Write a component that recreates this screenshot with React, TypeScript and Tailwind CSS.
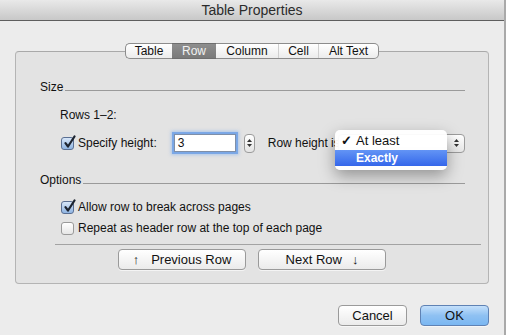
import React from "react";

const font = { fontFamily: '"Liberation Sans", Arial, sans-serif' };

function Check({ checked }: { checked: boolean }) {
  return (
    <span
      className={
        "relative inline-block w-[13px] h-[13px] rounded-[3px] border shrink-0 " +
        (checked
          ? "border-[#5a6f93] bg-gradient-to-b from-[#d7e6f8] to-[#8fb4e2]"
          : "border-[#9a9a9a] bg-gradient-to-b from-[#ffffff] to-[#e6e6e6]")
      }
    >
      {checked && (
        <svg className="absolute left-[1px] top-[-3px]" width="13" height="14" viewBox="0 0 13 14">
          <path d="M2.5 8.2 L5 11.5 L11.5 1.5" fill="none" stroke="#1d2430" strokeWidth="2.2" strokeLinecap="round" strokeLinejoin="round" />
        </svg>
      )}
    </span>
  );
}

function Arrows() {
  return (
    <span className="flex flex-col items-center gap-[2px]">
      <svg width="5" height="3" viewBox="0 0 5 3"><path d="M0 3 L2.5 0 L5 3Z" fill="#333" /></svg>
      <svg width="5" height="3" viewBox="0 0 5 3"><path d="M0 0 L2.5 3 L5 0Z" fill="#333" /></svg>
    </span>
  );
}

function Stepper() {
  return (
    <span className="inline-flex w-[11px] h-[19px] items-center justify-center rounded-[4px] border border-[#9c9c9c] bg-gradient-to-b from-[#ffffff] to-[#e4e4e4]">
      <Arrows />
    </span>
  );
}

function Tab({ label, w, selected, first, last }: { label: string; w: number; selected?: boolean; first?: boolean; last?: boolean }) {
  return (
    <div
      className={
        "h-full flex items-center justify-center text-[12px] " +
        (selected
          ? "bg-gradient-to-b from-[#8e8e8e] to-[#7a7a7a] text-[#f2f2f2] border-y border-[#6e6e6e]"
          : "bg-gradient-to-b from-[#ffffff] to-[#ececec] text-[#111] border-y border-[#8c8c8c]") +
        (first ? " border-l rounded-l-[5px]" : "") +
        (last ? " border-r rounded-r-[5px]" : "")
      }
      style={{ width: w }}
    >
      {label}
    </div>
  );
}

function Divider() {
  return <div className="w-px h-full bg-[#cfcfcf] border-y border-[#8c8c8c]" />;
}

function Btn({ children, w, primary }: { children: React.ReactNode; w: number; primary?: boolean }) {
  return (
    <div
      className={
        "h-[21px] flex items-center justify-center rounded-[4px] border text-[13px] text-[#111] shadow-[0_1px_0_rgba(255,255,255,0.6)] " +
        (primary
          ? "border-[#5f82b4] bg-gradient-to-b from-[#c4e0fb] via-[#8fc1f2] to-[#7ab7f2]"
          : "border-[#9a9a9a] bg-gradient-to-b from-[#ffffff] to-[#ebebeb]")
      }
      style={{ width: w }}
    >
      {children}
    </div>
  );
}

export default function App() {
  return (
    <div className="w-[506px] h-[335px] bg-[#ececec] overflow-hidden relative border-r-2 border-[#a9a9a9]" style={font}>
      {/* Title bar */}
      <div className="h-[21px] bg-gradient-to-b from-[#e9e9e9] to-[#c8c8c8] border-b border-[#5e5e5e] flex items-center justify-center text-[14px] text-[#2b2b2b]">
        Table Properties
      </div>

      {/* Panel */}
      <div className="ml-[15px] mr-[15px] mt-[30px] h-[233px] rounded-[4px] border border-[#b4b4b4] border-t-[#a9a9a9] bg-[#e3e3e3] flex flex-col">
        <div className="-mt-[9px] h-[16px] flex justify-center">
          <Tab label="Table" w={47} first />
          <Tab label="Row" w={44} selected />
          <Tab label="Column" w={62} />
          <Divider />
          <Tab label="Cell" w={39} />
          <Divider />
          <Tab label="Alt Text" w={60} last />
        </div>

        {/* Size */}
        <div className="mt-[18px] h-[20px] flex items-center pl-[24px] pr-[23px] text-[12px] text-[#111]">
          <span>Size</span>
          <div className="flex-1 ml-[2px] mt-[6px] h-px bg-[#9a9a9a]" />
        </div>
        <div className="mt-[8px] h-[20px] flex items-center pl-[44px] text-[12px] text-[#111]">Rows 1–2:</div>
        <div className="mt-[7px] h-[22px] flex items-center pl-[45px] text-[12px] text-[#111]">
          <Check checked />
          <span className="ml-[4px]">Specify height:</span>
          <div className="ml-[17px] w-[62px] h-[18px] bg-white border border-[#7f8fa8] shadow-[0_0_0_2px_rgba(104,156,230,0.75),0_0_3px_3px_rgba(120,170,240,0.5)] flex items-center pl-[3px] text-[12px]">
            3
          </div>
          <span className="ml-[8px] flex"><Stepper /></span>
          <span className="ml-[13px]">Row height is</span>
          <div className="ml-[-2px] w-[127px] h-[19px] rounded-[4px] border border-[#9c9c9c] bg-gradient-to-b from-[#ffffff] to-[#e6e6e6] flex items-center justify-end pr-[5px]">
            <Arrows />
          </div>
        </div>

        {/* Options */}
        <div className="mt-[16px] h-[20px] flex items-center pl-[24px] pr-[23px] text-[12px] text-[#111]">
          <span>Options</span>
          <div className="flex-1 ml-[2px] mt-[6px] h-px bg-[#9a9a9a]" />
        </div>
        <div className="mt-[7px] h-[20px] flex items-center pl-[45px] text-[12px] text-[#111]">
          <Check checked />
          <span className="ml-[4px]">Allow row to break across pages</span>
        </div>
        <div className="mt-[1px] h-[20px] flex items-center pl-[45px] text-[12px] text-[#111]">
          <Check checked={false} />
          <span className="ml-[4px]">Repeat as header row at the top of each page</span>
        </div>
        <div className="mt-[6px] ml-[39px] mr-[7px] h-px bg-[#a3a3a3]" />
        <div className="mt-[4px] flex pl-[102px] gap-[12px]">
          <Btn w={128}><span className="mr-[12px]">↑</span>Previous Row</Btn>
          <Btn w={128}>Next Row<span className="ml-[10px]">↓</span></Btn>
        </div>
      </div>

      {/* Footer */}
      <div className="mt-[21px] flex justify-end pr-[15px] gap-[13px]">
        <Btn w={69}>Cancel</Btn>
        <Btn w={69} primary>OK</Btn>
      </div>

      {/* Popup menu */}
      <div className="absolute left-[335px] top-[130px] w-[112px] h-[40px] bg-white/95 rounded-[5px] shadow-[0_6px_16px_rgba(0,0,0,0.35)] pt-[1px] text-[13px] text-[#111]">
        <div className="h-[19px] flex items-center">
          <span className="w-[21px] pl-[6px] font-bold">✓</span>
          <span>At least</span>
        </div>
        <div className="h-[16px] flex items-center bg-gradient-to-b from-[#6394f5] to-[#3566ea] text-white font-bold text-[12px]">
          <span className="w-[21px]" />
          <span>Exactly</span>
        </div>
      </div>
    </div>
  );
}
